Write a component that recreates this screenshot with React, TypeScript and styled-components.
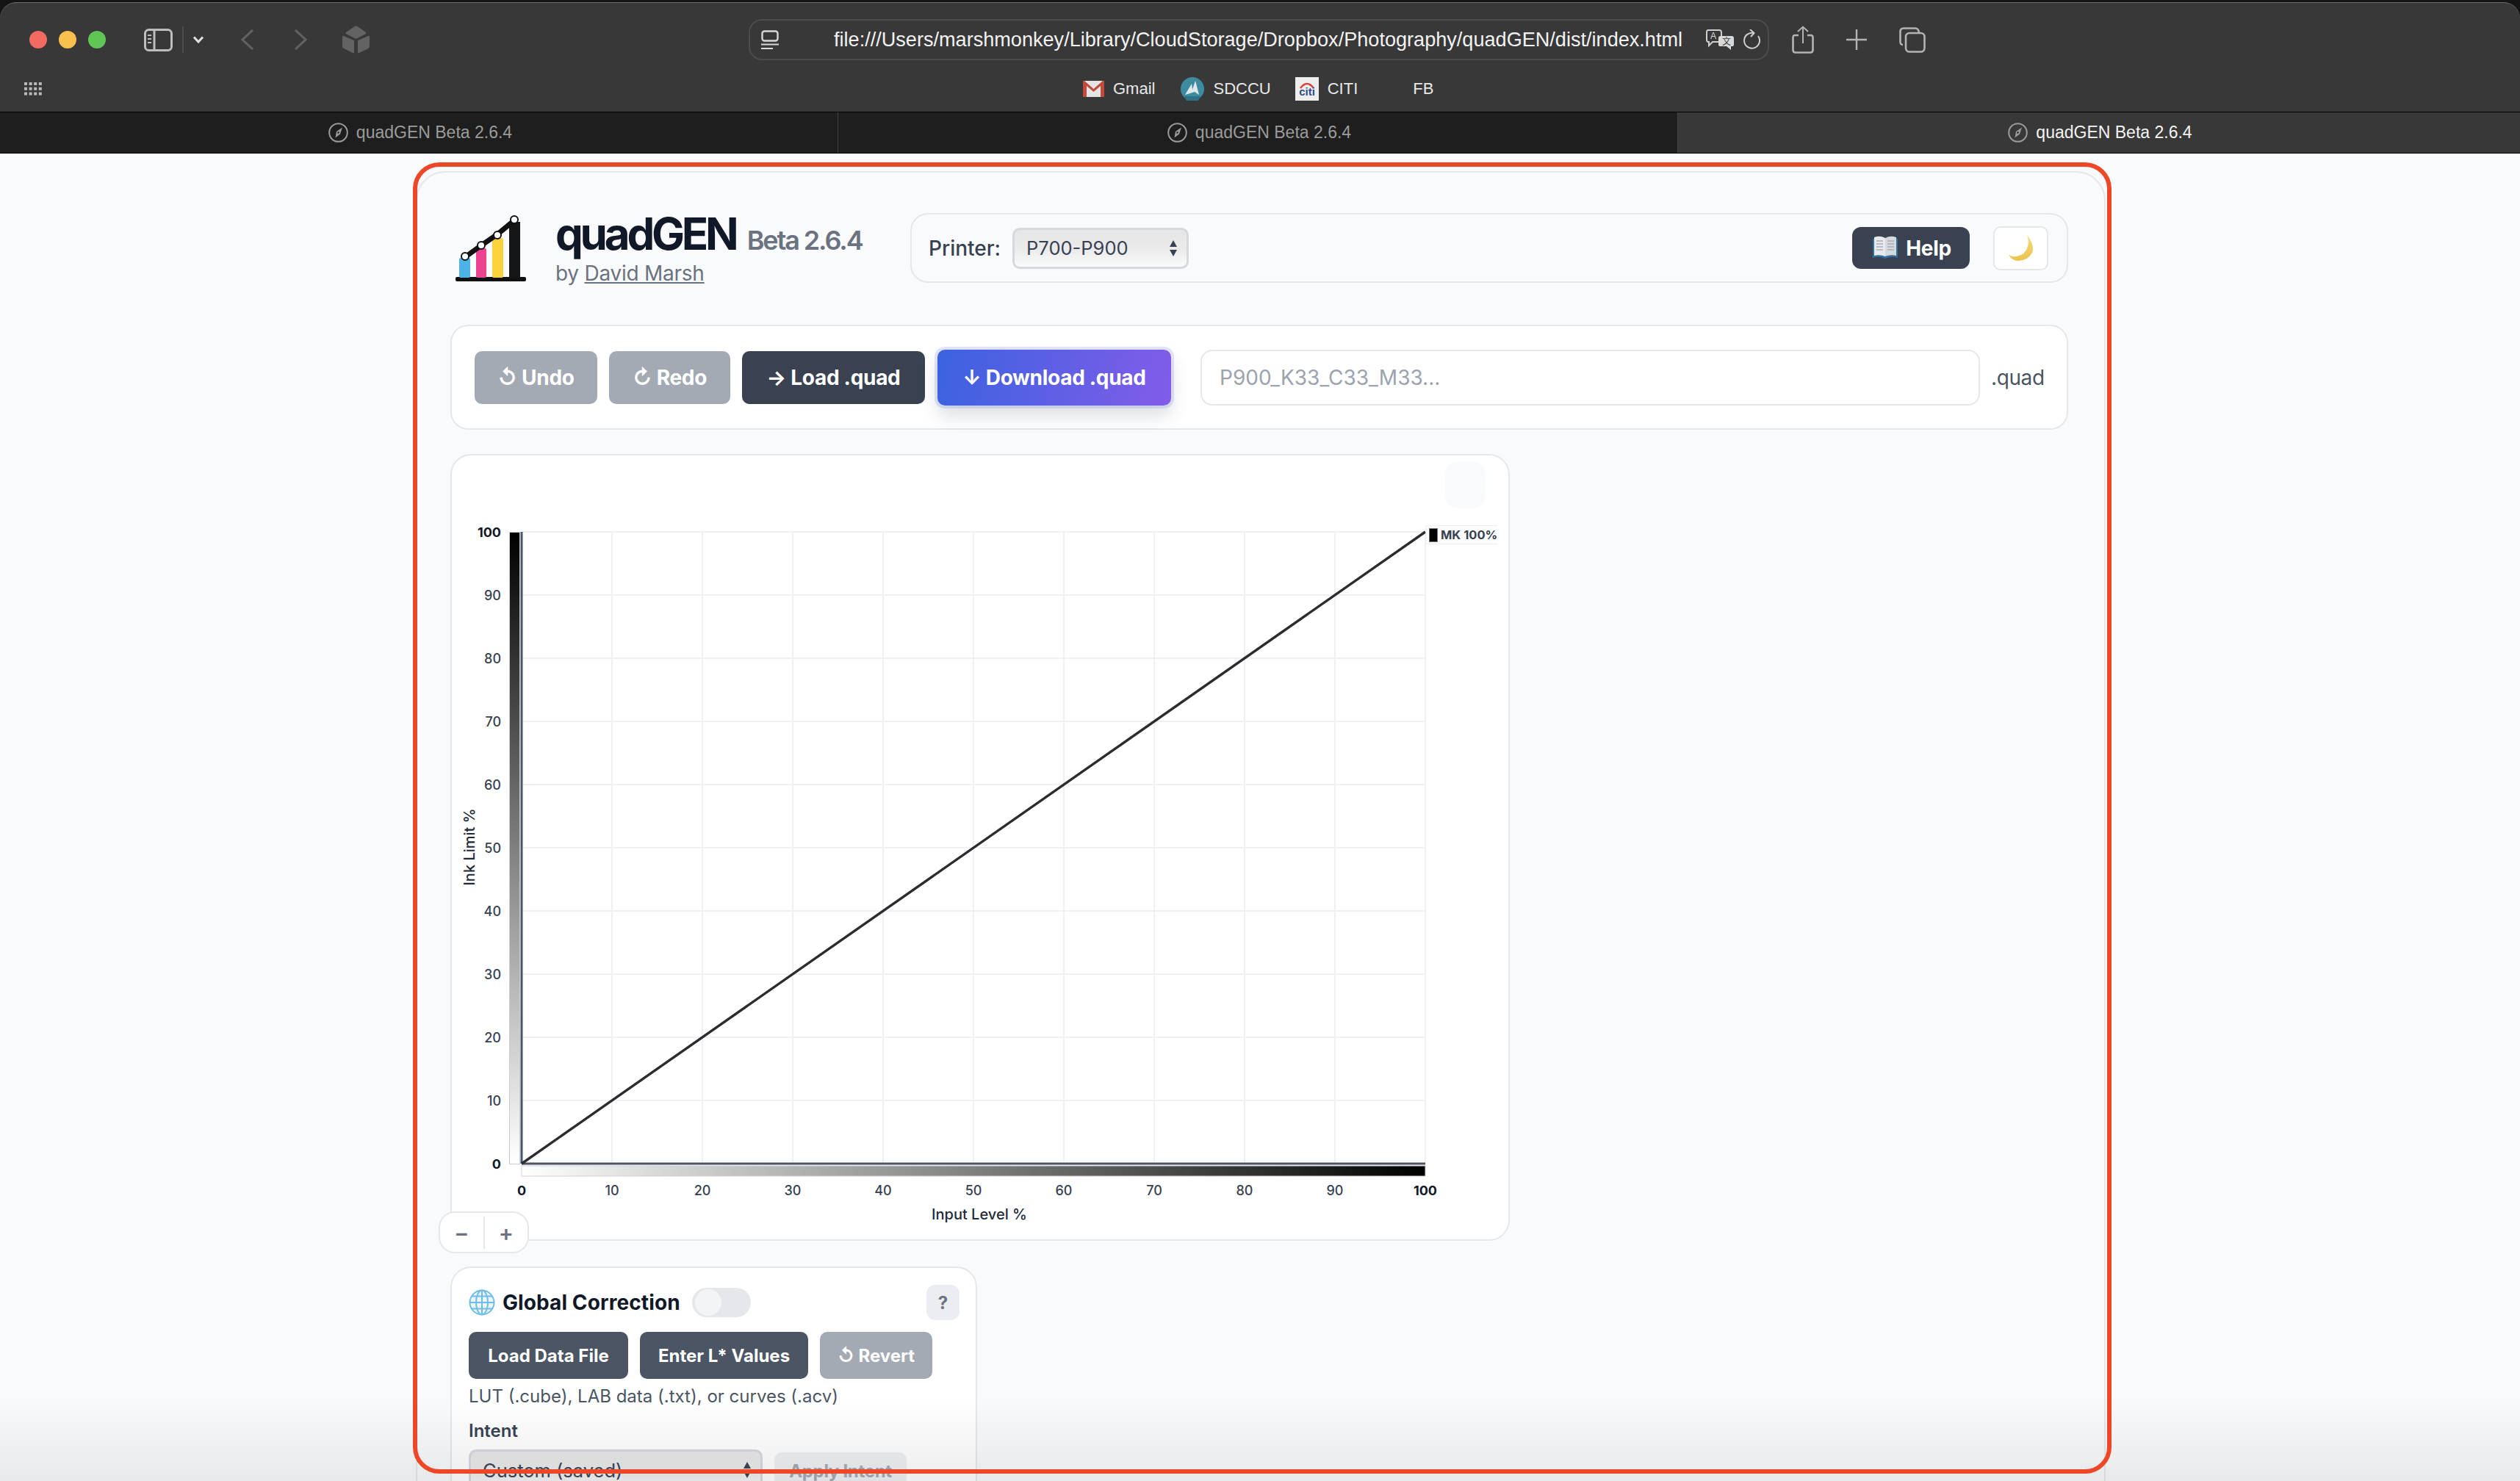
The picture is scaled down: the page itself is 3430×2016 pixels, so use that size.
import React from 'react';
import styled, { createGlobalStyle } from 'styled-components';

const Global = createGlobalStyle`
  html, body { margin: 0; padding: 0; height: 2016px; overflow: hidden; background: #141414; }
  * { box-sizing: border-box; }
  #root { height: 2016px; overflow: hidden; position: relative; }
`;

const CHROME = `"Liberation Sans", Arial, sans-serif`;
const UI = `Inter, "Noto Sans", "DejaVu Sans", sans-serif`;

const Screen = styled.div`display: flex; flex-direction: column; height: 2016px; padding-top: 3px; position: relative; overflow: hidden;`;
const Chrome = styled.header`
  flex: none; height: 149px; background: #383838; border-top: 1px solid #6e6e6e; border-radius: 22px 22px 0 0;
  display: flex; flex-direction: column;
`;
const ToolRow = styled.div`height: 100px; display: flex; align-items: center; padding-left: 40px;`;
const Lights = styled.div`display: flex; gap: 16px; margin-right: 52px;`;
const Light = styled.span<{ $c: string }>`width: 24px; height: 24px; border-radius: 50%; background: ${p => p.$c};`;
const Slot = styled.span<{ $w: number; $ml?: number }>`flex: none; width: ${p => p.$w}px; margin-left: ${p => p.$ml ?? 0}px; display: flex; align-items: center; justify-content: center;`;
const UrlBar = styled.div`
  flex: none; width: 1389px; height: 56px; margin-left: 516px; border: 2px solid #4c4c4c; border-radius: 18px;
  display: flex; align-items: center; padding-left: 15px; padding-right: 10px;
`;
const UrlText = styled.span`font: 400 27.1px ${CHROME}; color: #f2f2f2; margin-left: 75px; width: 1187px; white-space: nowrap;`;
const MarkRow = styled.div`height: 34px; display: flex; align-items: center; padding-left: 33px;`;
const Bookmark = styled.span<{ $ml: number }>`display: flex; align-items: center; gap: 12px; margin-left: ${p => p.$ml}px; font: 400 22px ${CHROME}; color: #e8e8e8;`;
const TabStrip = styled.nav`flex: none; height: 57px; display: flex; background: #1e1e1e; border-top: 1px solid #000; border-bottom: 1px solid #000;`;
const Tab = styled.div<{ $active?: boolean; $w: number }>`
  flex: none; width: ${p => p.$w}px; display: flex; align-items: center; justify-content: center; gap: 11px; padding-left: 4px;
  font: 400 23px ${CHROME}; color: ${p => (p.$active ? '#f4f4f4' : '#9b9b9b')}; background: ${p => (p.$active ? '#383838' : 'transparent')};
  border-right: 1px solid ${p => (p.$active ? 'transparent' : '#444')};
`;

const Page = styled.main`flex: 1; min-height: 0; background: #f9fafb; padding-top: 24px; padding-left: 566px; overflow: hidden;`;
const Container = styled.div`
  width: 2300px; height: 1900px; border: 2px solid #e5e7eb; border-radius: 40px; padding: 55px 0 0 45px; background: #f9fafb;
`;
const Content = styled.div`width: 2202px; display: flex; flex-direction: column; font-family: ${UI};`;

const Header = styled.div`display: flex; align-items: center; height: 95px;`;
const Brand = styled.div`width: 626px; flex: none; display: flex; align-items: center; padding-left: 7px; gap: 40px;`;
const BrandText = styled.div`display: flex; flex-direction: column;`;
const TitleLine = styled.div`display: flex; align-items: baseline; gap: 15px; line-height: 64px; white-space: nowrap;`;
const Title = styled.span`font: 700 60px/64px ${UI}; color: #111827; letter-spacing: -4.2px;`;
const Version = styled.span`font: 600 36px/64px ${UI}; color: #6b7280; letter-spacing: -2.1px;`;
const Byline = styled.div`font: 400 28px/34px ${UI}; color: #6b7280; margin-top: -4px; letter-spacing: -0.25px;`;
const Link = styled.a`color: #6b7280; text-decoration: underline;`;
const PrinterBar = styled.div`
  flex: 1; height: 95px; border: 2px solid #e5e7eb; border-radius: 24px; display: flex; align-items: center; padding: 0 23px;
`;
const PrinterLabel = styled.span`font: 500 28px ${UI}; color: #374151; margin-right: 16px;`;
const NativeSelect = styled.div<{ $w: number; $h: number }>`
  position: relative; width: ${p => p.$w}px; height: ${p => p.$h}px; flex: none; border: 3px solid #d6d8de; border-radius: 10px;
  background: linear-gradient(#e6e6e6, #ebebeb 55%, #fbfbfb); display: flex; align-items: center; padding-left: 16px;
  font: 400 25.5px ${UI}; color: #374151;
`;
const SelectArrows = styled.svg`position: absolute; right: 12px; top: 50%; margin-top: -12px;`;
const Spacer = styled.div`flex: 1;`;
const HelpButton = styled.button`
  width: 160px; height: 57px; border: 0; border-radius: 12px; background: #3a4252; color: #fff; font: 700 28px ${UI};
  display: flex; align-items: center; justify-content: center; gap: 10px; padding: 0 0 0 2px; letter-spacing: -0.3px;
`;
const MoonButton = styled.button`
  width: 75px; height: 60px; margin-left: 32px; margin-right: 2px; border: 2px solid #e5e7eb; border-radius: 10px; background: #fff;
  display: flex; align-items: center; justify-content: center; padding: 0;
`;

const ToolCard = styled.section`
  margin-top: 57px; height: 143px; background: #fff; border: 2px solid #e5e7eb; border-radius: 24px;
  display: flex; align-items: center; padding-left: 31px;
`;
const Btn = styled.button<{ $bg: string; $w: number; $ml?: number; $h?: number; $fs?: number }>`
  flex: none; width: ${p => p.$w}px; height: ${p => p.$h ?? 72}px; margin-left: ${p => p.$ml ?? 0}px; border: 0; border-radius: 10px; background: ${p => p.$bg};
  color: #fff; font: 700 ${p => p.$fs ?? 28}px ${UI}; letter-spacing: ${p => (p.$fs ? '0' : '-0.3px')}; padding: 0; white-space: nowrap;
`;
const DownloadBtn = styled.button`
  flex: none; width: 318px; height: 76px; margin-left: 17px; border: 0; border-radius: 10px;
  background: linear-gradient(100deg, #3b63e0, #825ce9); color: #fff; font: 700 28px ${UI}; letter-spacing: -0.3px; padding: 0; white-space: nowrap;
  box-shadow: 0 0 0 4px rgba(99, 118, 235, .18), 0 14px 24px rgba(40, 50, 80, .16);
`;
const NameInput = styled.input`
  flex: none; width: 1061px; height: 76px; margin-left: 40px; border: 2px solid #e5e7eb; border-radius: 16px; background: #fff;
  padding: 0 24px; font: 400 28px ${UI}; outline: none;
  &::placeholder { color: #9ca3af; opacity: 1; }
`;
const Suffix = styled.span`margin-left: 15px; font: 400 28px ${UI}; color: #4b5563; letter-spacing: -0.4px;`;

const ChartCard = styled.section`
  position: relative; margin-top: 33px; width: 1442px; height: 1071px; background: #fff; border: 2px solid #e5e7eb; border-radius: 28px;
`;
const ChartSvg = styled.svg`display: block;`;
const GhostBtn = styled.div`position: absolute; top: 8px; right: 31px; width: 55px; height: 64px; border-radius: 18px; background: #f9fafb;`;
const ZoomCtl = styled.div`
  position: absolute; left: -18px; bottom: -19px; width: 123px; height: 57px; background: #fff; border: 2px solid #e5e7eb; border-radius: 22px;
  display: flex; align-items: center;
`;
const ZoomBtn = styled.span`flex: 1; text-align: center; font: 600 30px/1 ${UI}; color: #6b7280;`;
const ZoomSep = styled.span`width: 2px; height: 44px; background: #e5e7eb;`;

const GlobalCard = styled.section`
  margin-top: 35px; width: 717px; height: 340px; background: #fff; border: 2px solid #e5e7eb; border-radius: 28px; padding: 23px 0 0 23px;
`;
const CardHead = styled.div`display: flex; align-items: center; height: 48px; position: relative;`;
const CardTitle = styled.h2`margin: 0 0 0 10px; width: 241px; white-space: nowrap; font: 700 28px ${UI}; color: #111827; letter-spacing: 0.1px;`;
const Toggle = styled.span`margin-left: 17px; width: 80px; height: 40px; border-radius: 20px; background: #e5e7eb; padding: 2px 4px;`;
const Knob = styled.span`display: block; width: 36px; height: 36px; border-radius: 50%; background: #f3f4f6;`;
const QButton = styled.span`
  position: absolute; left: 623px; top: 0; width: 45px; height: 48px; border-radius: 12px; background: #ecedf0;
  display: flex; align-items: center; justify-content: center; font: 700 24px ${UI}; color: #6b7280;
`;
const BtnRow = styled.div`display: flex; gap: 16px; margin-top: 16px;`;
const HelpText = styled.p`margin: 12px 0 0; font: 400 24px/24px ${UI}; color: #4b5563; white-space: nowrap;`;
const FieldLabel = styled.div`margin-top: 23px; font: 600 24px/24px ${UI}; color: #374151;`;
const IntentRow = styled.div`display: flex; gap: 16px; margin-top: 13px; align-items: flex-start;`;
const ApplyBtn = styled.button`
  flex: none; width: 180px; height: 50px; margin-top: 4px; border: 0; border-radius: 10px; background: #eff0f2; color: #a3a8b2; font: 700 24px ${UI}; letter-spacing: -0.3px; padding: 0;
`;

const Fade = styled.div`
  position: absolute; left: 0; right: 0; bottom: 0; height: 116px; pointer-events: none;
  background: linear-gradient(rgba(60, 64, 72, 0), rgba(60, 64, 72, .09));
`;
const Outline = styled.div`
  position: absolute; left: 562px; top: 221px; width: 2312px; height: 1785px; border: 6px solid #ee4728; border-radius: 36px; pointer-events: none;
`;

const Compass = () => (
  <svg width="27" height="27" viewBox="0 0 27 27" fill="none">
    <circle cx="13.5" cy="13.5" r="12.3" stroke="#9b9b9b" strokeWidth="2" />
    <path d="M19 6.5 L16 15.5 L9.5 20.5 L11 12 Z" fill="#9b9b9b" />
    <circle cx="13.5" cy="13.5" r="1.4" fill="#383838" />
  </svg>
);

const TX = [0, 10, 20, 30, 40, 50, 60, 70, 80, 90, 100];
const X0 = 710, X1 = 1940, Y0 = 1584, Y1 = 724;
const xAt = (v: number) => X0 + ((X1 - X0) * v) / 100;
const yAt = (v: number) => Y0 - ((Y0 - Y1) * v) / 100;

const Chart = () => (
  <ChartSvg width="1438" height="1067" viewBox="615 620 1438 1067">
    <defs>
      <linearGradient id="gx" x1="0" x2="1" y1="0" y2="0"><stop offset="0" stopColor="#fff" /><stop offset="1" stopColor="#000" /></linearGradient>
      <linearGradient id="gy" x1="0" x2="0" y1="0" y2="1"><stop offset="0" stopColor="#000" /><stop offset="1" stopColor="#fff" /></linearGradient>
    </defs>
    {TX.map(v => <line key={'v' + v} x1={xAt(v)} x2={xAt(v)} y1={Y1} y2={Y0} stroke="#f0f1f4" strokeWidth="2" />)}
    {TX.map(v => <line key={'h' + v} x1={X0} x2={X1} y1={yAt(v)} y2={yAt(v)} stroke="#f0f1f4" strokeWidth="2" />)}
    <rect x="693.5" y="724.5" width="14" height="860" fill="url(#gy)" stroke="#c9ccd2" strokeWidth="1" />
    <rect x="710" y="1587" width="1230" height="14" fill="url(#gx)" stroke="#d0d2d7" strokeWidth="1" />
    <line x1={X0} x2={X0} y1={Y1} y2={Y0} stroke="#4b5563" strokeWidth="3" />
    <line x1={X0} x2={X1} y1={Y0} y2={Y0} stroke="#4b5563" strokeWidth="3" />
    <line x1={X0} y1={Y0} x2={X1} y2={Y1} stroke="#2a2c30" strokeWidth="3.4" />
    {TX.map(v => {
      const edge = v === 0 || v === 100;
      return (
        <g key={'l' + v} fontFamily={UI} fontSize="18" fontWeight={edge ? 700 : 500} fill={edge ? '#111827' : '#374151'}>
          <text x="682" y={yAt(v) + 7} textAnchor="end">{v}</text>
          <text x={xAt(v)} y="1627" textAnchor="middle">{v}</text>
        </g>
      );
    })}
    <text x="1333" y="1660" textAnchor="middle" fontFamily={UI} fontSize="20" fontWeight="500" fill="#1f2937">Input Level %</text>
    <text transform="translate(646 1153) rotate(-90)" textAnchor="middle" fontFamily={UI} fontSize="20" fontWeight="500" fill="#1f2937">Ink Limit %</text>
    <rect x="1941" y="715.5" width="97" height="25" fill="#fff" />
    <path d="M2038 715.5 H1941 V740.5 H2038" fill="none" stroke="#eceef1" strokeWidth="1" />
    <rect x="1945.5" y="719.5" width="11" height="18" fill="#000" stroke="#6b7280" strokeWidth="1" />
    <text x="1961" y="733.5" fontFamily={UI} fontSize="16.5" fontWeight="700" fill="#374151">MK 100%</text>
  </ChartSvg>
);

const Logo = () => (
  <svg width="96" height="90" viewBox="620 288 96 90" fill="none">
    <rect x="620" y="372" width="96" height="6" rx="2" fill="#111" />
    <rect x="625" y="346" width="15" height="27" rx="2" fill="#4db3e6" />
    <rect x="648" y="333" width="14" height="40" rx="2" fill="#ec4390" />
    <rect x="670" y="319" width="15" height="54" rx="2" fill="#fbd13e" />
    <rect x="693" y="297" width="15" height="76" fill="#161616" />
    <path d="M633 345 L655 329 L677 314 L700 295" stroke="#111" strokeWidth="7" />
    {[[633, 344], [655, 329], [677, 315], [700, 294]].map(([x, y]) => (
      <circle key={x} cx={x} cy={y} r="5" fill="#fff" stroke="#111" strokeWidth="2" />
    ))}
  </svg>
);

const Arrows = ({ h = 24 }: { h?: number }) => (
  <SelectArrows width="12" height={h} viewBox="0 0 12 24">
    <path d="M6 1 L11 10 H1 Z M6 23 L11 14 H1 Z" fill="#374151" />
  </SelectArrows>
);

export default function App() {
  return (
    <>
      <Global />
      <Screen>
        <Chrome>
          <ToolRow>
            <Lights>
              <Light $c="#f36b60" /><Light $c="#f8c14e" /><Light $c="#5fc554" />
            </Lights>
            <svg width="39" height="31" viewBox="0 0 39 31" fill="none">
              <rect x="1.5" y="1.5" width="36" height="28" rx="5" stroke="#bdbdbd" strokeWidth="3" />
              <path d="M14 2 V29" stroke="#bdbdbd" strokeWidth="3" />
              <path d="M5 9 H10 M5 14 H10 M5 19 H10" stroke="#bdbdbd" strokeWidth="2" />
            </svg>
            <Slot $w={2} $ml={13}><svg width="2" height="36"><rect width="2" height="36" fill="#4d4d4d" /></svg></Slot>
            <Slot $w={16} $ml={12}>
              <svg width="16" height="10" viewBox="0 0 16 10" fill="none"><path d="M2 1.5 L8 8 L14 1.5" stroke="#e2e2e2" strokeWidth="3" /></svg>
            </Slot>
            <Slot $w={18} $ml={50}>
              <svg width="18" height="28" viewBox="0 0 18 28" fill="none"><path d="M16 1 L2 14 L16 27" stroke="#626262" strokeWidth="3" /></svg>
            </Slot>
            <Slot $w={18} $ml={54}>
              <svg width="18" height="28" viewBox="0 0 18 28" fill="none"><path d="M2 1 L16 14 L2 27" stroke="#626262" strokeWidth="3" /></svg>
            </Slot>
            <Slot $w={37} $ml={48}>
              <svg width="37" height="38" viewBox="0 0 37 38" fill="#636363">
                <path d="M16.5 1 Q18.5 -0.5 20.5 1 L32 9 Q33 10 32 11 L20.5 17 Q18.5 18 16.5 17 L5 11 Q4 10 5 9 Z" />
                <path d="M0 15 Q0 13 2 14 L16 20 V36 Q16 38 14 37 L2 31 Q0 30 0 27 Z" />
                <path d="M37 15 Q37 13 35 14 L21 20 V36 Q21 38 23 37 L35 31 Q37 30 37 27 Z" />
              </svg>
            </Slot>
            <UrlBar>
              <svg width="24" height="26" viewBox="0 0 24 26" fill="none">
                <rect x="1.5" y="1.5" width="21" height="13" rx="3" stroke="#d8d8d8" strokeWidth="2.4" />
                <path d="M0 19.5 H24 M0 25 H16" stroke="#d8d8d8" strokeWidth="2" />
              </svg>
              <UrlText>file:///Users/marshmonkey/Library/CloudStorage/Dropbox/Photography/quadGEN/dist/index.html</UrlText>
              <svg width="38" height="28" viewBox="0 0 38 28">
                <path d="M3 1 H18 Q21 1 21 4 V14 Q21 17 18 17 H9 L4 22 V17 H3 Q1 17 1 14 V4 Q1 1 3 1 Z" fill="none" stroke="#cfcfcf" strokeWidth="2" />
                <text x="6" y="13" fontFamily={CHROME} fontSize="12" fill="#d8d8d8">A</text>
                <path d="M20 9 H35 Q38 9 38 12 V21 Q38 23 35 23 H34 V28 L28 23 H20 Q17 23 17 21 V12 Q17 9 20 9 Z" fill="#d8d8d8" />
                <text x="22" y="21" fontFamily={`"Noto Sans CJK SC", sans-serif`} fontSize="12" fill="#383838">文</text>
              </svg>
              <Slot $w={24} $ml={12}>
                <svg width="24" height="28" viewBox="0 0 24 28" fill="none">
                  <path d="M15 5 A10.5 10.5 0 1 0 21 9" stroke="#d0d0d0" strokeWidth="2" />
                  <path d="M10 0 L15.5 5 L11 10" stroke="#d0d0d0" strokeWidth="2" />
                </svg>
              </Slot>
            </UrlBar>
            <Slot $w={30} $ml={31}>
              <svg width="30" height="38" viewBox="0 0 30 38" fill="none" stroke="#b3b3b3" strokeWidth="2.6">
                <path d="M9 13 H4 Q1.5 13 1.5 16 V33 Q1.5 36.5 5 36.5 H25 Q28.5 36.5 28.5 33 V16 Q28.5 13 26 13 H21" />
                <path d="M15 24 V2 M8 8 L15 1.5 L22 8" strokeWidth="2" />
              </svg>
            </Slot>
            <Slot $w={28} $ml={44}>
              <svg width="28" height="28" viewBox="0 0 28 28"><path d="M14 0 V28 M0 14 H28" stroke="#b3b3b3" strokeWidth="2.4" /></svg>
            </Slot>
            <Slot $w={36} $ml={44}>
              <svg width="36" height="35" viewBox="0 0 36 35" fill="none" stroke="#b3b3b3" strokeWidth="2.6">
                <path d="M5 24 Q1.5 24 1.5 20 V6 Q1.5 1.5 6 1.5 H22 Q26 1.5 27 7" />
                <rect x="9" y="8" width="25.5" height="25.5" rx="5" />
              </svg>
            </Slot>
          </ToolRow>
          <MarkRow>
            <svg width="24" height="18" viewBox="0 0 24 18" fill="#b9b9b9">
              {[0, 1, 2].map(r => [0, 1, 2, 3].map(c => <rect key={`${r}${c}`} x={c * 6.6} y={r * 6.8} width="4" height="4" />))}
            </svg>
            <Bookmark $ml={1417}>
              <svg width="29" height="22" viewBox="0 0 29 22">
                <rect width="29" height="22" rx="2" fill="#e4e4e4" />
                <path d="M0 2 V22 H5 V7 L14.5 15 L24 7 V22 H29 V2 Q29 0 27 0 L14.5 11 L2 0 Q0 0 0 2 Z" fill="#c24a3d" />
              </svg>
              Gmail
            </Bookmark>
            <Bookmark $ml={35}>
              <svg width="32" height="32" viewBox="0 0 32 32">
                <circle cx="16" cy="16" r="16" fill="#3e8ba0" />
                <path d="M6 24 L15 9 L16 17 L20 5 L25 24 L19 20 L13 22 Z" fill="#dfe9ec" />
                <path d="M5 26 H27 L24 32 H8 Z" fill="#2f7186" />
              </svg>
              SDCCU
            </Bookmark>
            <Bookmark $ml={33}>
              <svg width="32" height="32" viewBox="0 0 32 32">
                <rect width="32" height="32" fill="#ededed" />
                <path d="M7 15 Q16 3 25 15" fill="none" stroke="#d9413c" strokeWidth="2.4" />
                <text x="16" y="25" textAnchor="middle" fontFamily={CHROME} fontSize="15" fontWeight="700" fill="#2f4a8a">citi</text>
              </svg>
              CITI
            </Bookmark>
            <Bookmark $ml={75}>FB</Bookmark>
          </MarkRow>
        </Chrome>
        <TabStrip>
          <Tab $w={1141}><Compass />quadGEN Beta 2.6.4</Tab>
          <Tab $w={1143}><Compass />quadGEN Beta 2.6.4</Tab>
          <Tab $w={1146} $active><Compass />quadGEN Beta 2.6.4</Tab>
        </TabStrip>
        <Page>
          <Container>
            <Content>
              <Header>
                <Brand>
                  <Logo />
                  <BrandText>
                    <TitleLine><Title>quadGEN</Title><Version>Beta 2.6.4</Version></TitleLine>
                    <Byline>by <Link>David Marsh</Link></Byline>
                  </BrandText>
                </Brand>
                <PrinterBar>
                  <PrinterLabel>Printer:</PrinterLabel>
                  <NativeSelect $w={240} $h={56}>P700-P900<Arrows /></NativeSelect>
                  <Spacer />
                  <HelpButton>
                    <svg width="36" height="38" viewBox="0 0 36 36">
                      <path d="M1 5 Q10 1 18 5 Q26 1 35 5 V31 Q26 28 18 32 Q10 28 1 31 Z" fill="#2f6f9f" />
                      <path d="M3 3 Q11 0 18 4 V29 Q11 26 3 28 Z" fill="#e7e9ec" />
                      <path d="M33 3 Q25 0 18 4 V29 Q25 26 33 28 Z" fill="#d5d8dd" />
                      <path d="M6 8 H15 M6 12 H15 M6 16 H15 M6 20 H15 M21 8 H30 M21 12 H30 M21 16 H30 M21 20 H30" stroke="#a9adb5" strokeWidth="1.5" />
                    </svg>
                    Help
                  </HelpButton>
                  <MoonButton>
                    <svg width="36" height="36" viewBox="0 0 36 36">
                      <defs><linearGradient id="mg" x1="0" x2="0" y1="0" y2="1"><stop offset="0" stopColor="#f4dd80" /><stop offset="1" stopColor="#ecc24d" /></linearGradient></defs>
                      <path d="M26 0 Q37 14 33 24 Q27 35 14 35 Q6 35 1 27 Q6 30 12 29 Q24 27 27 15 Q29 7 26 0 Z" fill="url(#mg)" />
                    </svg>
                  </MoonButton>
                </PrinterBar>
              </Header>

              <ToolCard>
                <Btn $bg="#a4aab4" $w={167}>↺ Undo</Btn>
                <Btn $bg="#a4aab4" $w={165} $ml={16}>↻ Redo</Btn>
                <Btn $bg="#3a4252" $w={249} $ml={16}>→ Load .quad</Btn>
                <DownloadBtn>↓ Download .quad</DownloadBtn>
                <NameInput placeholder="P900_K33_C33_M33..." />
                <Suffix>.quad</Suffix>
              </ToolCard>

              <ChartCard>
                <Chart />
                <GhostBtn />
                <ZoomCtl>
                  <ZoomBtn>−</ZoomBtn><ZoomSep /><ZoomBtn>+</ZoomBtn>
                </ZoomCtl>
              </ChartCard>

              <GlobalCard>
                <CardHead>
                  <svg width="36" height="36" viewBox="0 0 36 36" fill="#eaf5fc" stroke="#6fbde6" strokeWidth="2">
                    <circle cx="18" cy="18" r="16.5" />
                    <ellipse cx="18" cy="18" rx="8" ry="16.5" />
                    <path d="M18 1.5 V34.5 M1.5 18 H34.5 M4 9.5 H32 M4 26.5 H32" fill="none" />
                  </svg>
                  <CardTitle>Global Correction</CardTitle>
                  <Toggle><Knob /></Toggle>
                  <QButton>?</QButton>
                </CardHead>
                <BtnRow>
                  <Btn $bg="#4b5563" $w={217} $h={64} $fs={24}>Load Data File</Btn>
                  <Btn $bg="#4b5563" $w={229} $h={64} $fs={24}>Enter L* Values</Btn>
                  <Btn $bg="#a4aab4" $w={153} $h={64} $fs={24}>↺ Revert</Btn>
                </BtnRow>
                <HelpText>LUT (.cube), LAB data (.txt), or curves (.acv)</HelpText>
                <FieldLabel>Intent</FieldLabel>
                <IntentRow>
                  <NativeSelect $w={400} $h={56}>Custom (saved)<Arrows /></NativeSelect>
                  <ApplyBtn>Apply Intent</ApplyBtn>
                </IntentRow>
              </GlobalCard>
            </Content>
          </Container>
        </Page>
        <Fade />
        <Outline />
      </Screen>
    </>
  );
}
